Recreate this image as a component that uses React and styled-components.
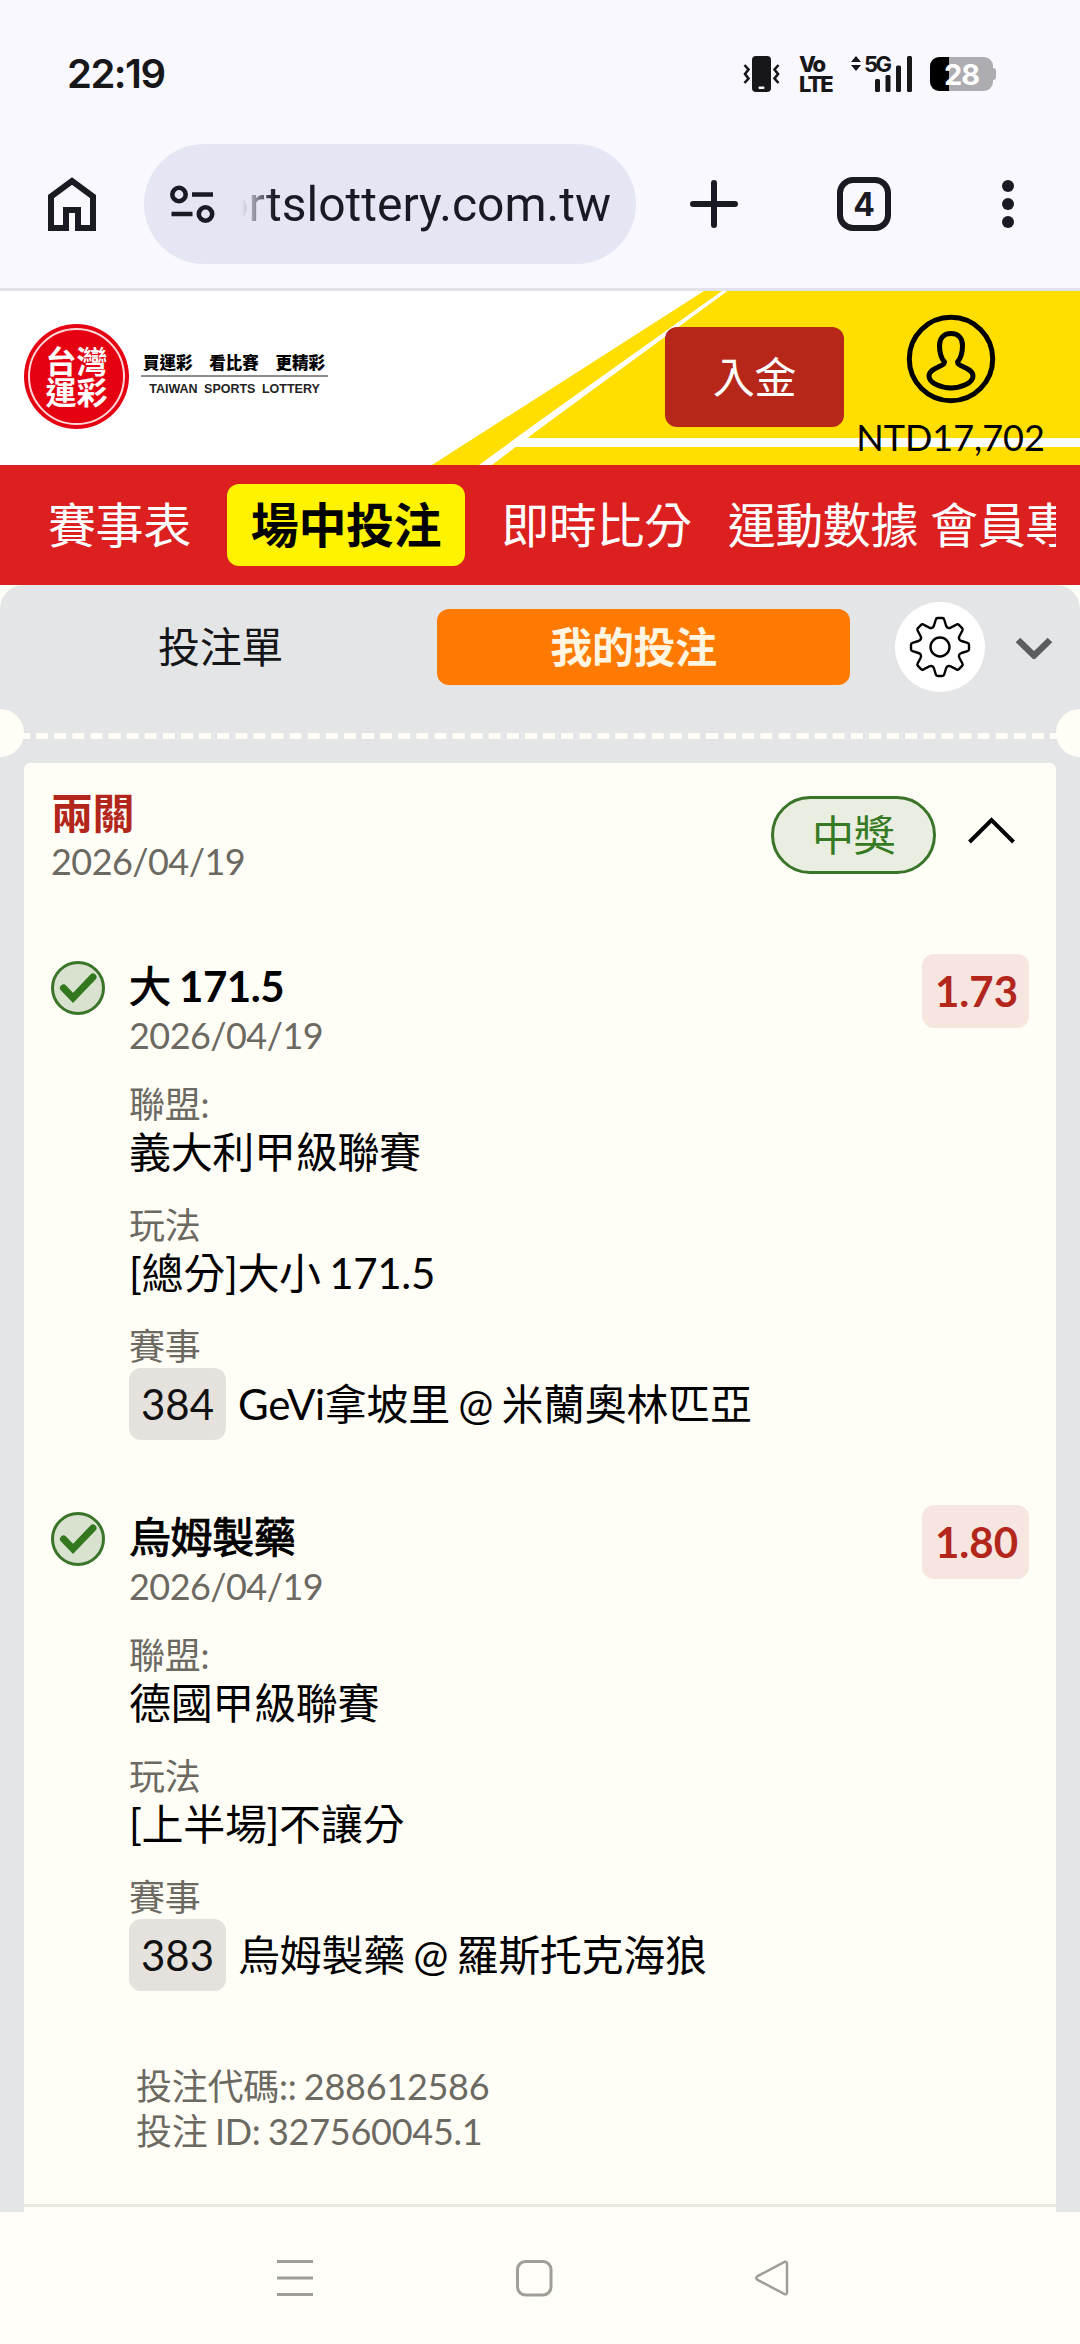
import React from 'react';
import styled, { createGlobalStyle } from 'styled-components';

const GlobalStyle = createGlobalStyle`
  * {
    box-sizing: border-box;
  }

  body {
    margin: 0;
    background: #fffef6;
    font-family: Lato, 'Noto Sans CJK TC', sans-serif;
  }

  svg {
    display: block;
    flex: none;
  }
`;

const Screen = styled.div`
  display: flex;
  flex-direction: column;
  width: 1080px;
  height: 2344px;
  overflow: hidden;
`;

/* ---------- phone status bar ---------- */

const StatusBar = styled.div`
  display: flex;
  align-items: center;
  justify-content: space-between;
  height: 144px;
  padding: 4px 84px 0 67px;
  background: #f9f8ff;
`;

const Clock = styled.span`
  margin-top: -2px;
  font-family: Inter, sans-serif;
  font-size: 40px;
  font-weight: 600;
  letter-spacing: -1.5px;
  color: #17171a;
`;

const StatusIcons = styled.div`
  display: flex;
  align-items: center;
`;

const Volte = styled.div`
  display: flex;
  flex-direction: column;
  width: 33px;
  margin: 0 19px 0 19px;
  font-family: Inter, sans-serif;
  font-size: 22px;
  font-weight: 800;
  line-height: 20px;
  letter-spacing: -2px;
  color: #17171a;
`;

const Battery = styled.div`
  display: flex;
  align-items: center;
  margin-left: 17px;
`;

const BatteryBody = styled.div`
  display: flex;
  align-items: center;
  justify-content: center;
  width: 63px;
  height: 34px;
  border-radius: 9px;
  background: linear-gradient(to right, #000 19px, #adacb0 19px);
  font-family: Inter, sans-serif;
  font-size: 29px;
  font-weight: 700;
  letter-spacing: -1px;
  color: #fff;
`;

const BatteryTip = styled.div`
  width: 3px;
  height: 12px;
  border-radius: 0 3px 3px 0;
  background: #adacb0;
`;

/* ---------- browser toolbar ---------- */

const Toolbar = styled.div`
  display: flex;
  align-items: center;
  height: 147px;
  padding: 0 66px 24px 48px;
  border-bottom: 3px solid #e2e1ec;
  background: #f9f8ff;
  color: #191a24;
`;

const AddressBar = styled.div`
  display: flex;
  align-items: center;
  width: 492px;
  height: 120px;
  margin: 0 54px 0 48px;
  padding: 0 25px 0 26px;
  border-radius: 60px;
  background: #e4e6f4;
`;

const Url = styled.div`
  display: flex;
  justify-content: flex-end;
  flex: 1;
  margin-left: 26px;
  padding-top: 2px;
  overflow: hidden;
  font-family: Roboto, sans-serif;
  font-size: 48px;
  line-height: 60px;
  white-space: nowrap;
  mask-image: linear-gradient(to right, transparent, #000 32px);
`;

const TabCount = styled.div`
  display: flex;
  align-items: center;
  justify-content: center;
  width: 54px;
  height: 54px;
  margin: 0 111px 0 99px;
  border: 6px solid #191a24;
  border-radius: 16px;
  font-family: Inter, sans-serif;
  font-size: 32px;
  font-weight: 700;
`;

/* ---------- site header ---------- */

const SiteHeader = styled.header`
  position: relative;
  display: flex;
  height: 174px;
  background: #fff;
`;

const HeaderArt = styled.svg`
  position: absolute;
  inset: 0;
`;

const Brand = styled.div`
  position: relative;
  display: flex;
  flex: none;
  align-items: flex-start;
  width: 665px;
  padding: 33px 0 0 24px;
`;

const BrandSeal = styled.div`
  display: flex;
  align-items: center;
  justify-content: center;
  width: 105px;
  height: 105px;
  padding: 4px;
  border-radius: 50%;
  background: #e50012;
`;

const SealRing = styled.div`
  display: flex;
  flex-direction: column;
  align-items: center;
  justify-content: center;
  width: 97px;
  height: 97px;
  border: 2px solid #ffd9d9;
  border-radius: 50%;
  font-size: 31px;
  font-weight: 700;
  line-height: 31px;
  color: #fff;
`;

const Slogan = styled.div`
  display: flex;
  flex-direction: column;
  width: 187px;
  margin: 28px 0 0 12px;
`;

const SloganZh = styled.div`
  display: flex;
  justify-content: space-between;
  height: 25px;
  padding: 0 3px 0 2px;
  border-bottom: 2px solid #8d8d8d;
  font-size: 16.5px;
  font-weight: 900;
  line-height: 22px;
  color: #000;
`;

const SloganEn = styled.div`
  padding-top: 5px;
  font-family: 'Liberation Sans', sans-serif;
  font-size: 12.5px;
  font-weight: 700;
  line-height: 14px;
  word-spacing: 3px;
  text-align: center;
  white-space: nowrap;
  color: #222;
`;

const DepositButton = styled.button`
  position: relative;
  flex: none;
  width: 179px;
  height: 100px;
  margin-top: 36px;
  padding: 0;
  border: 0;
  border-radius: 12px;
  background: #b72719;
  font-family: inherit;
  font-size: 42px;
  line-height: 100px;
  letter-spacing: -0.3px;
  color: #fff;
`;

const Account = styled.div`
  position: relative;
  display: flex;
  flex-direction: column;
  align-items: center;
  width: 213px;
  padding-top: 23px;
`;

const Balance = styled.span`
  margin-top: 11px;
  font-size: 36px;
  line-height: 44px;
  color: #000;
`;

/* ---------- red navigation ---------- */

const MainNav = styled.nav`
  display: flex;
  align-items: center;
  height: 120px;
  padding: 0 24px;
  background: #dc1f1f;
`;

const NavScroller = styled.div`
  display: flex;
  flex: 1;
  gap: 12px;
  overflow: hidden;
`;

const NavItem = styled.a`
  flex: none;
  height: 82px;
  padding: ${(p) => p.$pad || '0 24px'};
  border-radius: 12px;
  background: ${(p) => (p.$active ? '#fff300' : 'transparent')};
  font-size: 48px;
  font-weight: ${(p) => (p.$active ? 700 : 400)};
  line-height: 82px;
  letter-spacing: -0.4px;
  white-space: nowrap;
  color: ${(p) => (p.$active ? '#000' : '#fff')};
`;

/* ---------- bet slip ---------- */

const Slip = styled.main`
  display: flex;
  flex-direction: column;
  height: 1627px;
  padding: 0 24px;
  border-radius: 24px 24px 0 0;
  background: #e4e5e7;
`;

const SlipTabs = styled.div`
  display: flex;
  align-items: center;
  height: 124px;
`;

const SlipTab = styled.button`
  width: 413px;
  height: 76px;
  padding: 0 20px 0 0;
  border: 0;
  border-radius: 12px;
  background: ${(p) => (p.$active ? '#ff7a00' : 'transparent')};
  font-family: inherit;
  font-size: 42px;
  font-weight: ${(p) => (p.$active ? 700 : 400)};
  line-height: 76px;
  letter-spacing: -0.4px;
  color: ${(p) => (p.$active ? '#fff5e1' : '#151618')};
`;

const GearButton = styled.div`
  display: flex;
  align-items: center;
  justify-content: center;
  width: 90px;
  height: 90px;
  margin: 0 29px 0 45px;
  border-radius: 50%;
  background: #fff;
`;

const Perforation = styled.div`
  display: flex;
  align-items: flex-start;
  justify-content: space-between;
  height: 54px;
  margin: 0 -48px;
`;

const Notch = styled.div`
  width: 48px;
  height: 48px;
  border-radius: 50%;
  background: #fffef6;
`;

const DashedLine = styled.div`
  flex: 1;
  height: 6px;
  margin: 24px -6px 0;
  border-top: 6px dashed #fffef6;
`;

const Ticket = styled.section`
  display: flex;
  flex-direction: column;
  height: 1444px;
  padding: 25px 27px 0;
  border-bottom: 3px solid #e9e6e1;
  border-radius: 6px 6px 0 0;
  background: #fffef6;
`;

const TicketEnd = styled.div`
  height: 5px;
  background: #fffef9;
`;

const TicketHeader = styled.div`
  display: flex;
  align-items: flex-start;
  margin-bottom: 77px;
`;

const TicketHeading = styled.div`
  flex: 1;
`;

const TicketType = styled.div`
  font-size: 42px;
  font-weight: 700;
  line-height: 50px;
  letter-spacing: -0.5px;
  color: #b3261c;
`;

const DateText = styled.div`
  font-size: 36px;
  line-height: ${(p) => p.$line || 48}px;
  letter-spacing: -0.55px;
  color: #6b6962;
`;

const ResultPill = styled.div`
  display: flex;
  align-items: center;
  justify-content: center;
  width: 165px;
  height: 78px;
  margin: 8px 31px 0 0;
  border: 3px solid #3a7429;
  border-radius: 39px;
  background: #eaeee0;
  font-size: 42px;
  line-height: 50px;
  letter-spacing: -0.4px;
  color: #367a24;
`;

const Legs = styled.div`
  display: flex;
  flex-direction: column;
  gap: 72px;
`;

const Leg = styled.article`
  display: grid;
  grid-template-columns: 54px 1fr auto;
  column-gap: 24px;
  align-items: start;
`;

const LegTitle = styled.div`
  font-size: 42px;
  font-weight: 700;
  line-height: 50px;
  letter-spacing: -0.4px;
  word-spacing: -1.5px;
  color: #000;
`;

const Medium = styled.span`
  font-weight: 400;
  -webkit-text-stroke: 1px #000;
`;

const Fields = styled.dl`
  display: flex;
  flex-direction: column;
  gap: 26px;
  margin: 23px 0 0;
`;

const FieldLabel = styled.dt`
  font-size: 36px;
  line-height: 45px;
  letter-spacing: -0.3px;
  color: #6b6962;
`;

const FieldValue = styled.dd`
  display: flex;
  align-items: center;
  margin: 0;
  font-size: 42px;
  line-height: 50px;
  letter-spacing: -0.32px;
  word-spacing: -2px;
  white-space: nowrap;
  color: #000;
`;

const MatchValue = styled(FieldValue)`
  margin-top: -1px;
  line-height: 72px;
`;

const MatchNumber = styled.span`
  height: 72px;
  margin-right: 12px;
  padding: 0 12px;
  border-radius: 12px;
  background: #e5e2dd;
  letter-spacing: 0;
  color: #111;
`;

const Odds = styled.div`
  height: 74px;
  margin-top: -7px;
  padding: 0 11px 0 13px;
  border-radius: 12px;
  background: #f7e6df;
  font-size: 42px;
  font-weight: 700;
  line-height: 74px;
  color: #b3261c;
`;

const TicketIds = styled.div`
  margin: 73px 0 0 85px;
  font-size: 36px;
  line-height: 45px;
  letter-spacing: -0.27px;
  word-spacing: -1.5px;
  color: #6b6962;
`;

/* ---------- system navigation ---------- */

const SystemNav = styled.div`
  display: flex;
  align-items: center;
  gap: 201px;
  height: 132px;
  padding-left: 276px;
  background: #fffef8;
`;

const legs = [
  {
    pick: '大',
    line: '171.5',
    odds: '1.73',
    league: '義大利甲級聯賽',
    market: '[總分]大小 171.5',
    number: '384',
    match: 'GeVi拿坡里 @ 米蘭奧林匹亞',
  },
  {
    pick: '烏姆製藥',
    odds: '1.80',
    league: '德國甲級聯賽',
    market: '[上半場]不讓分',
    number: '383',
    match: '烏姆製藥 @ 羅斯托克海狼',
  },
];

const GEAR_TEETH = [0, 45, 90, 135, 180, 225, 270, 315];

// one tooth plus the valley after it, repeated around the wheel
function gearPath() {
  const turn = (x, y, deg) => {
    const a = (deg * Math.PI) / 180;
    return `${(x * Math.cos(a) - y * Math.sin(a)).toFixed(2)},${(x * Math.sin(a) + y * Math.cos(a)).toFixed(2)}`;
  };
  return (
    GEAR_TEETH.map(
      (d, i) =>
        `${i ? 'L' : 'M'}${turn(-6, -21.5, d)} L${turn(-4.2, -27.5, d)} Q${turn(-3.8, -29, d)} ${turn(-2.2, -29, d)} L${turn(2.2, -29, d)} Q${turn(3.8, -29, d)} ${turn(4.2, -27.5, d)} L${turn(6, -21.5, d)} Q${turn(7.4, -17.8, d)} ${turn(-6, -21.5, d + 45)}`
    ).join(' ') + ' Z'
  );
}

function VibrateIcon() {
  return (
    <svg width="37" height="36" viewBox="0 0 37 36">
      <rect x="9" width="19" height="36" rx="4" fill="#17171a" />
      <rect x="15.5" y="30.5" width="6" height="2.5" rx="1" fill="#fff" />
      <path
        d="M1.5 9l4 4.5L2 18l3.5 4.5-4 4.5M35.500 9l-4 4.500 3.500 4.500-3.500 4.500 4 4.500"
        fill="none"
        stroke="#17171a"
        strokeWidth="2.6"
      />
    </svg>
  );
}

function SignalIcon() {
  return (
    <svg width="62" height="38" viewBox="0 0 62 38" fill="#17171a">
      <path d="M5 1l5 6H0zM5 16l5-6H0z" />
      <text x="13" y="17" fontFamily="Inter, sans-serif" fontSize="22" fontWeight="700" letterSpacing="-2.5">
        5G
      </text>
      <rect x="24" y="24" width="5" height="13" rx="1.5" />
      <rect x="34.5" y="20" width="5" height="17" rx="1.5" />
      <rect x="45" y="10.5" width="5" height="26.5" rx="1.5" />
      <rect x="56" y="1" width="5" height="36" rx="1.5" />
    </svg>
  );
}

function HomeIcon() {
  return (
    <svg width="48" height="54" viewBox="0 0 48 54" fill="none" stroke="currentColor" strokeWidth="6">
      <path d="M3 51V19.5L24 4l21 15.5V51H30V33H18v18z" />
    </svg>
  );
}

function TuneIcon() {
  return (
    <svg width="46" height="40" viewBox="0 0 46 40" fill="none" stroke="currentColor" strokeWidth="4.6">
      <circle cx="9" cy="10.5" r="6.7" />
      <path d="M22 10.5h21M1.5 30h21" />
      <circle cx="35.5" cy="30" r="6.7" />
    </svg>
  );
}

function PlusIcon() {
  return (
    <svg width="48" height="48" viewBox="0 0 48 48" stroke="currentColor" strokeWidth="6" strokeLinecap="round">
      <path d="M24 3v42M3 24h42" />
    </svg>
  );
}

function DotsIcon() {
  return (
    <svg width="12" height="48" viewBox="0 0 12 48" fill="currentColor">
      <circle cx="6" cy="6" r="6" />
      <circle cx="6" cy="24" r="6" />
      <circle cx="6" cy="42" r="6" />
    </svg>
  );
}

function AvatarIcon() {
  return (
    <svg width="90" height="90" viewBox="-45 -45 90 90" fill="none" stroke="#000" strokeWidth="5">
      <circle r="41.7" />
      <path
        d="M0-25.500C-8-25.500-11.500-20-11.500-13.500C-11.500-7-10.500-1.500-6.500 3C-6.500 8-22 8.500-22 17C-22 24.500-9 29-0 29C9 29 22 24.500 22 17C22 8.500 6.500 8 6.500 3C10.500-1.500 11.500-7 11.500-13.500C11.500-20 8-25.500 0-25.500Z"
        strokeLinejoin="round"
      />
    </svg>
  );
}

function CheckIcon() {
  return (
    <svg width="54" height="54" viewBox="0 0 54 54" fill="none">
      <circle cx="27" cy="27" r="25.5" fill="#d9e1cf" stroke="#3a7429" strokeWidth="3" />
      <path d="M12.5 27l9.5 10 20-21" stroke="#33781f" strokeWidth="7" strokeLinecap="round" />
    </svg>
  );
}

export default function App() {
  return (
    <Screen>
      <GlobalStyle />
      <StatusBar>
        <Clock>22:19</Clock>
        <StatusIcons>
          <VibrateIcon />
          <Volte>
            <span>Vo</span>
            <span>LTE</span>
          </Volte>
          <SignalIcon />
          <Battery>
            <BatteryBody>28</BatteryBody>
            <BatteryTip />
          </Battery>
        </StatusIcons>
      </StatusBar>

      <Toolbar>
        <HomeIcon />
        <AddressBar>
          <TuneIcon />
          <Url>ortslottery.com.tw</Url>
        </AddressBar>
        <PlusIcon />
        <TabCount>4</TabCount>
        <DotsIcon />
      </Toolbar>

      <SiteHeader>
        <HeaderArt width="1080" height="174" viewBox="0 0 1080 174">
          <path d="M432 174L704 0h376v174z" fill="#ffde00" />
          <path d="M479 174L540 129.5 722 0h5.5L540 137.5 492 174z" fill="#fff" />
          <path d="M526 147h554v9H512z" fill="#fff" />
        </HeaderArt>
        <Brand>
          <BrandSeal>
            <SealRing>
              <span>台灣</span>
              <span>運彩</span>
            </SealRing>
          </BrandSeal>
          <Slogan>
            <SloganZh>
              <span>買運彩</span>
              <span>看比賽</span>
              <span>更精彩</span>
            </SloganZh>
            <SloganEn>TAIWAN SPORTS LOTTERY</SloganEn>
          </Slogan>
        </Brand>
        <DepositButton>入金</DepositButton>
        <Account>
          <AvatarIcon />
          <Balance>NTD17,702</Balance>
        </Account>
      </SiteHeader>

      <MainNav>
        <NavScroller>
          <NavItem>賽事表</NavItem>
          <NavItem $active>場中投注</NavItem>
          <NavItem>即時比分</NavItem>
          <NavItem $pad="0">運動數據</NavItem>
          <NavItem $pad="0">會員專區</NavItem>
        </NavScroller>
      </MainNav>

      <Slip>
        <SlipTabs>
          <SlipTab>投注單</SlipTab>
          <SlipTab $active>我的投注</SlipTab>
          <GearButton>
            <svg width="62" height="62" viewBox="-31 -31 62 62" fill="none" stroke="#000" strokeWidth="2.4" strokeLinejoin="round">
              <path d={gearPath()} />
              <circle r="9.5" />
            </svg>
          </GearButton>
          <svg width="40" height="24" viewBox="0 0 40 24" fill="none" stroke="#5c5d60" strokeWidth="6.5">
            <path d="M4 5l16 15.5L36 5" />
          </svg>
        </SlipTabs>
        <Perforation>
          <Notch />
          <DashedLine />
          <Notch />
        </Perforation>

        <Ticket>
          <TicketHeader>
            <TicketHeading>
              <TicketType>兩關</TicketType>
              <DateText $line={46}>2026/04/19</DateText>
            </TicketHeading>
            <ResultPill>中獎</ResultPill>
            <svg width="62" height="86" viewBox="0 0 62 86" fill="none" stroke="#000" strokeWidth="4">
              <path d="M2.5 54l22-22 22 22" />
            </svg>
          </TicketHeader>

          <Legs>
            {legs.map((leg) => (
              <Leg key={leg.number}>
                <CheckIcon />
                <div>
                  <LegTitle>
                    <Medium>{leg.pick}</Medium>
                    {leg.line && ` ${leg.line}`}
                  </LegTitle>
                  <DateText>2026/04/19</DateText>
                  <Fields>
                    <div>
                      <FieldLabel>聯盟:</FieldLabel>
                      <FieldValue>{leg.league}</FieldValue>
                    </div>
                    <div>
                      <FieldLabel>玩法</FieldLabel>
                      <FieldValue>{leg.market}</FieldValue>
                    </div>
                    <div>
                      <FieldLabel>賽事</FieldLabel>
                      <MatchValue>
                        <MatchNumber>{leg.number}</MatchNumber>
                        {leg.match}
                      </MatchValue>
                    </div>
                  </Fields>
                </div>
                <Odds>{leg.odds}</Odds>
              </Leg>
            ))}
          </Legs>

          <TicketIds>
            <div>投注代碼:: 288612586</div>
            <div>投注 ID: 327560045.1</div>
          </TicketIds>
        </Ticket>
        <TicketEnd />
      </Slip>

      <SystemNav>
        <svg width="38" height="38" viewBox="0 0 38 38" stroke="#a19e98" strokeWidth="3">
          <path d="M1 2.5h36M1 19h36M1 35.5h36" />
        </svg>
        <svg width="38" height="38" viewBox="0 0 38 38" fill="none" stroke="#a19e98" strokeWidth="3">
          <rect x="2.5" y="2.5" width="33.5" height="33.5" rx="8" />
        </svg>
        <svg width="38" height="38" viewBox="0 0 38 38" fill="none" stroke="#a19e98" strokeWidth="2.5" strokeLinejoin="round">
          <path d="M30.6 2.8L3.5 17.200Q1 19 3.500 20.800L30.600 35.200Q33 36 33 33V5Q33 2 30.600 2.800z" />
        </svg>
      </SystemNav>
    </Screen>
  );
}
